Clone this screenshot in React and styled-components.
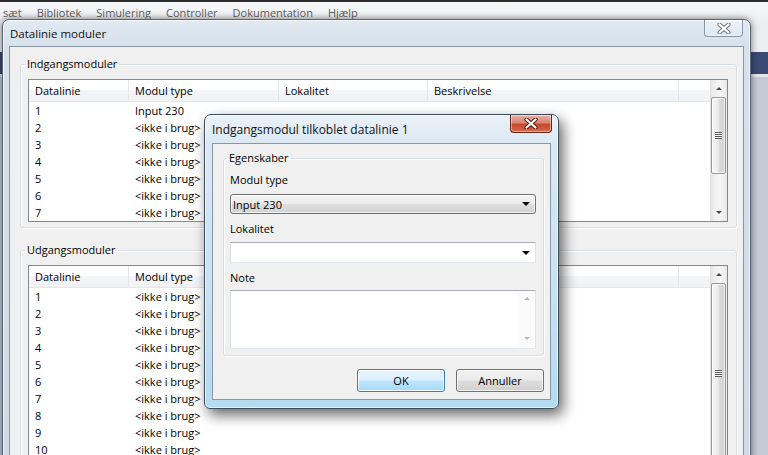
import React from 'react'
import styled, { createGlobalStyle } from 'styled-components'

const UI = `"Segoe UI", "Open Sans", "Noto Sans", sans-serif`
const COLS = '100px 150px 149px 251px 1fr'

const GlobalStyle = createGlobalStyle`
  html, body {
    margin: 0;
    padding: 0;
    overflow: hidden;
  }
  body {
    font-family: ${UI};
    font-size: 11px;
    color: #000;
  }
  * {
    box-sizing: border-box;
  }
`

const inputRows = [
  ['1', 'Input 230'],
  ['2', '<ikke i brug>'],
  ['3', '<ikke i brug>'],
  ['4', '<ikke i brug>'],
  ['5', '<ikke i brug>'],
  ['6', '<ikke i brug>'],
  ['7', '<ikke i brug>'],
]
const outputRows = Array.from({ length: 10 }, (_, i) => [String(i + 1), '<ikke i brug>'])

const menu = ['sæt', 'Bibliotek', 'Simulering', 'Controller', 'Dokumentation', 'Hjælp']

const CloseGlyph = ({ outline }) => (
  <svg width="14" height="11" viewBox="0 0 14 11">
    <path d="M2.5 1.5 L11.5 9.5 M11.5 1.5 L2.5 9.5" stroke={outline} strokeWidth="4.2" strokeLinecap="round" />
    <path d="M2.5 1.5 L11.5 9.5 M11.5 1.5 L2.5 9.5" stroke="#fff" strokeWidth="2.2" strokeLinecap="round" />
  </svg>
)

const Scroll = ({ top, height }) => (
  <ScrollBar>
    <ScrollBtn>
      <Arrow $dir="up" $c="#4a4a4a" $w={3} />
    </ScrollBtn>
    <Track>
      <Thumb $top={top} $h={height}>
        <Grip />
      </Thumb>
    </Track>
    <ScrollBtn>
      <Arrow $dir="down" $c="#4a4a4a" $w={3} />
    </ScrollBtn>
  </ScrollBar>
)

const List = ({ height, rows, thumbTop, thumbHeight }) => (
  <ListView $h={height}>
    <ListMain>
      <HeaderRow>
        <HeaderCell>Datalinie</HeaderCell>
        <HeaderCell>Modul type</HeaderCell>
        <HeaderCell>Lokalitet</HeaderCell>
        <HeaderCell>Beskrivelse</HeaderCell>
        <HeaderCell $last />
      </HeaderRow>
      {rows.map(r => (
        <Row key={r[0]}>
          <Cell>{r[0]}</Cell>
          <Cell>{r[1]}</Cell>
        </Row>
      ))}
    </ListMain>
    <Scroll top={thumbTop} height={thumbHeight} />
  </ListView>
)

const App = () => {
  return (
    <>
      <GlobalStyle />
      <Desktop>
        <MenuBar>
          {menu.map(m => (
            <MenuItem key={m}>{m}</MenuItem>
          ))}
        </MenuBar>

        <Window>
          <WinTitleBar>
            <WinTitle>Datalinie moduler</WinTitle>
            <CaptionClose $inactive>
              <CloseGlyph outline="#6f7780" />
            </CaptionClose>
          </WinTitleBar>
          <Client>
            <GroupBox>
              <Legend>Indgangsmoduler</Legend>
              <List height={143} rows={inputRows} thumbTop={0} thumbHeight={77} />
            </GroupBox>
            <GroupBox $gap={14}>
              <Legend>Udgangsmoduler</Legend>
              <List height={220} rows={outputRows} thumbTop={0} thumbHeight={180} />
            </GroupBox>
          </Client>
        </Window>

        <Dialog>
          <DialogTitleBar>
            Indgangsmodul tilkoblet datalinie 1
            <CaptionClose>
              <CloseGlyph outline="#5b1c10" />
            </CaptionClose>
          </DialogTitleBar>
          <DialogClient>
            <GroupBox $inner>
              <Legend>Egenskaber</Legend>
              <FieldLabel $mt={0}>Modul type</FieldLabel>
              <Combo $h={20} $button $mt={6}>
                <span>Input 230</span>
                <Arrow $dir="down" $c="#000" $w={4} />
              </Combo>
              <FieldLabel $mt={7}>Lokalitet</FieldLabel>
              <Combo $h={21} $mt={5}>
                <span />
                <Arrow $dir="down" $c="#000" $w={4} />
              </Combo>
              <FieldLabel $mt={7}>Note</FieldLabel>
              <NoteBox>
                <NoteScroll>
                  <Arrow $dir="up" $c="#b9b9b9" $w={3} />
                  <Arrow $dir="down" $c="#b9b9b9" $w={3} />
                </NoteScroll>
              </NoteBox>
            </GroupBox>
            <ButtonRow>
              <PushButton $default>OK</PushButton>
              <PushButton>Annuller</PushButton>
            </ButtonRow>
          </DialogClient>
        </Dialog>
      </Desktop>
    </>
  )
}

export default App

const Desktop = styled.div`
  position: relative;
  width: 768px;
  height: 455px;
  overflow: hidden;
  background: linear-gradient(
    to bottom,
    #eceef1 0,
    #eceef1 52px,
    #3b4a74 52px,
    #3b4a74 74px,
    #e4e7ee 74px,
    #e4e7ee 77px,
    #c6cad5 77px
  );
`
const MenuBar = styled.div`
  display: flex;
  align-items: center;
  gap: 15px;
  height: 22px;
  padding: 1px 0 0 3px;
  border-top: 2px solid #2e2e2e;
  background: linear-gradient(to bottom, #f7f8f9, #eceef1);
`
const MenuItem = styled.span`
  color: #5f5f5f;
  font-size: 11px;
  white-space: nowrap;
`
const Window = styled.div`
  position: absolute;
  left: 2px;
  top: 19px;
  width: 749px;
  height: 460px;
  display: flex;
  flex-direction: column;
  padding: 0 6px 0 6px;
  border: 1px solid #5a6675;
  border-radius: 7px 7px 0 0;
  background: linear-gradient(to bottom, #e2eaf2 0, #d6e1eb 26px, #cfdae6 100%);
  box-shadow: 0 0 7px rgba(0, 0, 0, 0.55), inset 0 0 0 1px rgba(255, 255, 255, 0.6);
`
const WinTitleBar = styled.div`
  position: relative;
  flex: none;
  height: 26px;
  display: flex;
  align-items: center;
  padding-left: 1px;
`
const WinTitle = styled.span`
  font-size: 11.5px;
  color: #111;
`
const CaptionClose = styled.div`
  position: absolute;
  top: 0;
  right: ${p => (p.$inactive ? 1 : -1)}px;
  width: ${p => (p.$inactive ? 39 : 42)}px;
  height: ${p => (p.$inactive ? 17 : 18)}px;
  display: flex;
  align-items: center;
  justify-content: center;
  border: 1px solid ${p => (p.$inactive ? '#8794a2' : '#5e2519')};
  border-top: none;
  border-radius: 0 0 4px 4px;
  background: ${p =>
    p.$inactive
      ? 'linear-gradient(to bottom, rgba(255,255,255,0.35), rgba(255,255,255,0.1))'
      : 'linear-gradient(to bottom, #eab2a4 0%, #d98673 45%, #c8482d 55%, #d46a4a 100%)'};
  box-shadow: inset 0 0 0 1px rgba(255, 255, 255, 0.45);
`
const Client = styled.div`
  flex: 1;
  min-height: 0;
  overflow: hidden;
  display: flex;
  flex-direction: column;
  padding: 9px 6px 0 10px;
  border: 1px solid #8996a4;
  background: #f0f0f0;
`
const GroupBox = styled.fieldset`
  flex: none;
  margin: ${p => p.$gap || 0}px 0 0;
  padding: ${p => (p.$inner ? '6px 7px 6px 6px' : '7px 8px 5px 7px')};
  min-width: 0;
  border: 1px solid #d5dfe5;
  border-radius: 3px;
  box-shadow: inset 1px 1px 0 #fff, 1px 1px 0 #fff;
`
const Legend = styled.legend`
  margin-left: -3px;
  padding: 0 2px;
  line-height: 16px;
  color: #000;
`
const ListView = styled.div`
  display: flex;
  height: ${p => p.$h}px;
  border: 1px solid #828790;
  background: #fff;
  overflow: hidden;
`
const ListMain = styled.div`
  flex: 1;
  min-width: 0;
`
const HeaderRow = styled.div`
  display: grid;
  grid-template-columns: ${COLS};
  height: 22px;
  border-bottom: 1px solid #e5e5e5;
  background: linear-gradient(to bottom, #ffffff 0, #ffffff 50%, #f4f5f7 50%, #f1f2f4 100%);
`
const HeaderCell = styled.div`
  padding-left: 6px;
  line-height: 21px;
  white-space: nowrap;
  border-right: ${p => (p.$last ? 'none' : '1px solid #e3e6ea')};
`
const Row = styled.div`
  display: grid;
  grid-template-columns: ${COLS};
  height: 17px;
  line-height: 17px;
`
const Cell = styled.div`
  padding-left: 6px;
  white-space: nowrap;
`
const ScrollBar = styled.div`
  width: 17px;
  flex: none;
  display: flex;
  flex-direction: column;
  background: linear-gradient(to right, #e1e1e1, #efefef 25%, #f5f5f5 60%, #e9e9e9);
`
const ScrollBtn = styled.div`
  height: 17px;
  flex: none;
  display: flex;
  align-items: center;
  justify-content: center;
`
const Track = styled.div`
  flex: 1;
  min-height: 0;
`
const Thumb = styled.div`
  margin: ${p => p.$top}px 0 0 1px;
  width: 15px;
  height: ${p => p.$h}px;
  display: flex;
  align-items: center;
  justify-content: center;
  border: 1px solid #979797;
  border-radius: 2px;
  background: linear-gradient(to right, #f6f6f6, #ececec 45%, #dcdcdc 55%, #d0d0d0);
  box-shadow: inset 0 0 0 1px rgba(255, 255, 255, 0.7);
`
const Grip = styled.div`
  width: 7px;
  height: 7px;
  background: repeating-linear-gradient(to bottom, #5d5d5d 0, #5d5d5d 1px, #f4f4f4 1px, #f4f4f4 2px);
`
const Arrow = styled.span`
  display: block;
  width: 0;
  height: 0;
  border-left: ${p => p.$w}px solid transparent;
  border-right: ${p => p.$w}px solid transparent;
  ${p =>
    p.$dir === 'up'
      ? `border-bottom: ${p.$w}px solid ${p.$c};`
      : `border-top: ${p.$w}px solid ${p.$c};`}
`
const Dialog = styled.div`
  position: absolute;
  left: 204px;
  top: 114px;
  width: 355px;
  height: 295px;
  display: flex;
  flex-direction: column;
  padding: 0 7px 8px 7px;
  border: 1px solid #3c4d5f;
  border-radius: 7px 7px 6px 6px;
  background: linear-gradient(to bottom, #ebf2f8 0, #dbe8f3 28px, #c9e0f0 60%, #b4dbef 100%);
  box-shadow: 4px 6px 14px rgba(0, 0, 0, 0.6), inset 0 0 0 1px rgba(255, 255, 255, 0.65);
`
const DialogTitleBar = styled.div`
  position: relative;
  flex: none;
  height: 28px;
  display: flex;
  align-items: center;
  font-size: 12px;
  color: #111;
`
const DialogClient = styled.div`
  flex: 1;
  min-height: 0;
  display: flex;
  flex-direction: column;
  padding: 6px 6px 0 10px;
  border: 1px solid #8797a8;
  background: #f0f0f0;
`
const FieldLabel = styled.div`
  margin-top: ${p => p.$mt}px;
  line-height: 16px;
`
const Combo = styled.div`
  margin-top: ${p => p.$mt}px;
  height: ${p => p.$h}px;
  display: flex;
  align-items: center;
  justify-content: space-between;
  padding: 0 5px 0 2px;
  border: 1px solid;
  border-radius: ${p => (p.$button ? 3 : 1)}px;
  border-color: ${p => (p.$button ? '#707070' : '#abadb3 #e2e3ea #e3e9ef #dbdfe6')};
  background: ${p =>
    p.$button
      ? 'linear-gradient(to bottom, #f4f4f4 0, #ececec 48%, #dedede 52%, #d2d2d2 100%)'
      : '#fff'};
  box-shadow: ${p => (p.$button ? 'inset 0 0 0 1px rgba(255,255,255,0.7)' : 'none')};
`
const NoteBox = styled.div`
  margin-top: 4px;
  height: 59px;
  display: flex;
  justify-content: flex-end;
  border: 1px solid;
  border-color: #abadb3 #e2e3ea #e3e9ef #dbdfe6;
  background: #fff;
`
const NoteScroll = styled.div`
  width: 17px;
  display: flex;
  flex-direction: column;
  align-items: center;
  justify-content: space-between;
  padding: 6px 0 8px;
  background: #fbfbfb;
`
const ButtonRow = styled.div`
  display: flex;
  justify-content: flex-end;
  gap: 11px;
  margin-top: 13px;
`
const PushButton = styled.div`
  width: 88px;
  height: 23px;
  display: flex;
  align-items: center;
  justify-content: center;
  border: 1px solid ${p => (p.$default ? '#3c7fb1' : '#707070')};
  border-radius: 3px;
  background: ${p =>
    p.$default
      ? 'linear-gradient(to bottom, #eaf6fd 0, #d9f0fc 48%, #bee6fd 52%, #a7d9f5 100%)'
      : 'linear-gradient(to bottom, #f2f2f2 0, #ebebeb 48%, #dddddd 52%, #cfcfcf 100%)'};
  box-shadow: inset 0 0 0 1px ${p => (p.$default ? 'rgba(255,255,255,0.85)' : 'rgba(255,255,255,0.7)')};
`
